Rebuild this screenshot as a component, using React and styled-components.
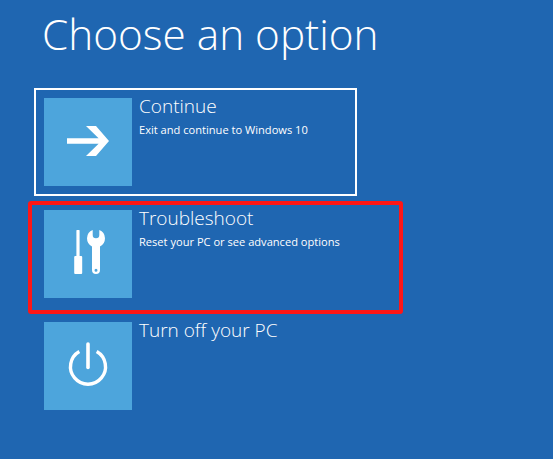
import React from 'react';
import styled, { createGlobalStyle } from 'styled-components';

const GlobalStyle = createGlobalStyle`
    html, body {
        margin: 0;
        padding: 0;
        height: 100%;
        background: #1f66b1;
    }
`

const ArrowIcon = () => (
    <svg width="88" height="88" viewBox="0 0 88 88">
        <polygon fill="#fff" points="23,40.2 54.6,40.2 42,28 52,28 65,43 52,58 42,58 54.6,45.8 23,45.8" />
    </svg>
)

const ToolsIcon = () => (
    <svg width="88" height="88" viewBox="0 0 88 88">
        <path fill="#fff" d="M32.4 20.6a.6.6 0 0 1 .6-.6h2a.6.6 0 0 1 .6.6V46h1.6a1 1 0 0 1 1 1v16a1 1 0 0 1-1 1h-6a1 1 0 0 1-1-1V47a1 1 0 0 1 1-1h1.2z" />
        <path fill="#fff" fillRule="evenodd" d="M48.7 20.1V25a3.300 3.300 0 0 0 6.600 0V20.100A9 9 0 0 1 56 36.500V60a4 4 0 0 1-8 0V36.500A9 9 0 0 1 48.700 20.100z M52 58.800a1.500 1.500 0 1 0 0 3a1.500 1.500 0 1 0 0-3z" />
    </svg>
)

const PowerIcon = () => (
    <svg width="88" height="88" viewBox="0 0 88 88" fill="none" stroke="#fff" strokeWidth="3.400">
        <path d="M35.300 29.500A17.500 17.500 0 1 0 52.700 29.500" />
        <path strokeLinecap="round" strokeWidth="3.600" d="M44 22V45.500" />
    </svg>
)

const options = [
    { title: 'Continue', desc: 'Exit and continue to Windows 10', icon: <ArrowIcon />, focused: true },
    { title: 'Troubleshoot', desc: 'Reset your PC or see advanced options', icon: <ToolsIcon />, marked: true },
    { title: 'Turn off your PC', icon: <PowerIcon /> },
]

const App = () => {
    return (
        <Page>
            <GlobalStyle />
            <Title>Choose an option</Title>
            <OptionList>
                {options.map((option) => (
                    <Option key={option.title} $focused={option.focused}>
                        <Tile>{option.icon}</Tile>
                        <OptionText>
                            <OptionTitle>{option.title}</OptionTitle>
                            {option.desc && <OptionDesc>{option.desc}</OptionDesc>}
                        </OptionText>
                        {option.marked && <RedMark />}
                    </Option>
                ))}
            </OptionList>
        </Page>
    )
}

const Page = styled.div`
    width: 553px;
    height: 459px;
    overflow: hidden;
    box-sizing: border-box;
    padding: 5px 0 0 34px;
    background: #1f66b1;
    color: #fff;
    font-family: "Open Sans", "Liberation Sans", sans-serif;
`

const Title = styled.h1`
    margin: 0 0 25px 8px;
    height: 58px;
    font-size: 42.300px;
    line-height: 58px;
    font-weight: 300;
    white-space: nowrap;
`

const OptionList = styled.div`
    display: flex;
    flex-direction: column;
    gap: 4px;
`

const Option = styled.div`
    position: relative;
    box-sizing: border-box;
    width: 323px;
    height: 108px;
    padding: 8px;
    display: flex;
    gap: 7px;
    border: 2px solid ${(props) => (props.$focused ? '#fff' : 'transparent')};
`

const Tile = styled.div`
    width: 88px;
    height: 88px;
    flex: none;
    background: #4da5dc;
`

const OptionText = styled.div`
    display: flex;
    flex-direction: column;
    margin-top: -5px;
`

const OptionTitle = styled.div`
    font-size: 19px;
    line-height: 27px;
    font-weight: 300;
    white-space: nowrap;
`

const OptionDesc = styled.div`
    margin-top: 2px;
    font-size: 11.100px;
    line-height: 16px;
    white-space: nowrap;
`

const RedMark = styled.div`
    position: absolute;
    left: -8px;
    top: -1px;
    width: 375px;
    height: 113px;
    box-sizing: border-box;
    border: 4px solid #ff1616;
    border-radius: 3px;
`

export default App
